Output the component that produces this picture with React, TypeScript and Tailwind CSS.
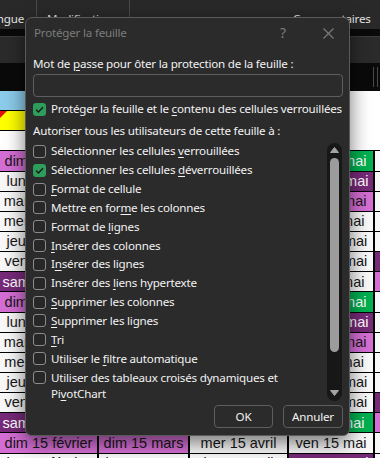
import React from 'react';

const wd = ['dim', 'lun', 'mar', 'mer', 'jeu', 'ven', 'sam'];
const months = [
  { name: 'février', start: 0 },
  { name: 'mars', start: 0 },
  { name: 'avril', start: 3 },
  { name: 'mai', start: 5 },
  { name: 'juin', start: 1 },
];
const holidays: Record<string, number[]> = { avril: [6], mai: [1, 8, 14] };

function cellClass(month: string, day: number, w: number) {
  if ((holidays[month] || []).includes(day)) return 'bg-[#00b050] text-white';
  if (w === 6) return 'bg-[#762a78] text-white';
  if (w === 0) return 'bg-[#d46ed4] text-[#161616]';
  return 'bg-[#f8f8f8] text-[#161616]';
}

const UI = { fontFamily: '"Noto Sans", "Open Sans", sans-serif' };
const CELL = { fontFamily: '"Liberation Sans", Arial, sans-serif' };

function Box({ checked }: { checked?: boolean }) {
  if (checked)
    return (
      <div className="flex h-[13px] w-[13px] shrink-0 items-center justify-center rounded-[3px] bg-[#2e9c5b]">
        <svg width="9" height="7" viewBox="0 0 9 7">
          <path d="M1 3.6 L3.4 6 L8 1.2" fill="none" stroke="#151515" strokeWidth="1.3" />
        </svg>
      </div>
    );
  return <div className="h-[13px] w-[13px] shrink-0 rounded-[3px] border border-[#8c8c8c] bg-[#272727]" />;
}

function K({ children }: { children: React.ReactNode }) {
  return <span className="underline decoration-1 underline-offset-[2px]">{children}</span>;
}

const items: { label: React.ReactNode; checked?: boolean }[] = [
  { label: <>Sélectionner les cellules <K>v</K>errouillées</> },
  { label: <>Sélectionner les cellules <K>d</K>éverrouillées</>, checked: true },
  { label: <><K>F</K>ormat de cellule</> },
  { label: <>Mettre en for<K>m</K>e les colonnes</> },
  { label: <>Format de <K>l</K>ignes</> },
  { label: <><K>I</K>nsérer des colonnes</> },
  { label: <>I<K>n</K>sérer des lignes</> },
  { label: <>Insérer des <K>l</K>iens hypertexte</> },
  { label: <><K>S</K>upprimer les colonnes</> },
  { label: <><K>S</K>upprimer les lignes</> },
  { label: <><K>T</K>ri</> },
  { label: <>Utiliser le <K>f</K>iltre automatique</> },
];

export default function App() {
  const days = Array.from({ length: 16 }, (_, i) => i + 1);
  return (
    <div className="relative h-[458px] w-[380px] overflow-hidden bg-black">
      {/* Ribbon */}
      <div className="flex h-[29px] bg-[#292929] text-[11.6px] tracking-[-0.2px] text-[#e6e6e6]" style={UI}>
        <div className="flex w-[36px] shrink-0 items-end justify-end overflow-hidden pb-[2px] pr-[12px] leading-[16px]">
          <span className="whitespace-nowrap">Langue</span>
        </div>
        <div className="w-px bg-[#4a4a4a]" />
        <div className="flex w-[92px] shrink-0 items-end pb-[2px] pl-[10px] leading-[16px]">
          <span className="whitespace-nowrap">Modifications</span>
        </div>
        <div className="w-px bg-[#4a4a4a]" />
        <div className="flex flex-1 items-end pb-[2px] pl-[163px] leading-[16px]">
          <span className="whitespace-nowrap">Commentaires</span>
        </div>
      </div>
      <div className="h-[7px] bg-[#0a0a0a]" />
      <div className="h-[27px] border-t border-[#3c3c3c] bg-[#2b2b2b]" />
      <div className="flex h-[28px] items-center justify-end gap-[3px] bg-[#0a0a0a] pr-[2px]">
        <div className="h-[20px] w-px bg-[#4a4a4a]" />
        <div className="h-[20px] w-px bg-[#4a4a4a]" />
      </div>

      {/* Sheet */}
      <div
        className="grid w-[480px] grid-cols-[97px_89px_97px_84px_96px] auto-rows-[19.15px] gap-x-[2px] gap-y-px bg-black text-[14.5px]"
        style={CELL}
      >
        <div className="bg-[#8ccbea]" />
        <div className="col-span-4 row-span-3 bg-white" />
        <div className="relative bg-[#ffff00]">
          <svg className="absolute left-0 top-0" width="7" height="7" viewBox="0 0 7 7">
            <path d="M0 0 H7 L0 7 Z" fill="#e01010" />
          </svg>
        </div>
        <div className="bg-white" />
        {days.map((d) =>
          months.map((m) => {
            const w = (m.start + d - 1) % 7;
            return (
              <div
                key={m.name + d}
                className={`flex items-center justify-center overflow-hidden whitespace-nowrap leading-none ${cellClass(m.name, d, w)}`}
              >
                {wd[w]} {String(d).padStart(2, '0')} {m.name}
              </div>
            );
          })
        )}
      </div>

      {/* Dialog */}
      <div
        className="absolute left-[25px] top-[17px] flex h-[419px] w-[325px] flex-col rounded-[7px] border border-[#5a5a5a] bg-[#2b2b2b] text-[11.6px] tracking-[-0.2px] text-[#f2f2f2] shadow-[0_6px_20px_rgba(0,0,0,0.55)]"
        style={UI}
      >
        <div className="flex h-[30px] shrink-0 items-center pl-[8px] pr-[15px] text-[#7c7c7c]">
          <span className="leading-[16px]">Protéger la feuille</span>
          <span className="ml-auto text-[14px] leading-[16px]">?</span>
          <svg className="ml-[37px]" width="11" height="11" viewBox="0 0 11 11">
            <path d="M0.5 0.5 L10.5 10.5 M10.5 0.5 L0.5 10.5" stroke="#7c7c7c" strokeWidth="1.1" />
          </svg>
        </div>
        <div className="flex flex-1 flex-col pl-[7px] pr-[6px]">
          <div className="mt-[8px] leading-[16px]">
            Mot de <K>p</K>asse pour ôter la protection de la feuille :
          </div>
          <div className="mt-[2px] h-[23px] rounded-[4px] border border-[#5e5e5e] bg-[#2b2b2b]" />
          <div className="mt-[4px] flex h-[16px] items-center gap-[5px] leading-[16px]">
            <Box checked />
            <span className="whitespace-nowrap">
              Protéger la feuille et le <K>c</K>ontenu des cellules verrouillées
            </span>
          </div>
          <div className="mt-[6px] leading-[16px]">Autoriser tous les utilisateurs de cette feuille à :</div>
          <div className="mt-[3px] flex h-[260px]">
            <div className="flex flex-1 flex-col">
              {items.map((it, i) => (
                <div key={i} className="flex h-[19px] items-center gap-[5px] leading-[16px]">
                  <Box checked={it.checked} />
                  <span className="whitespace-nowrap">{it.label}</span>
                </div>
              ))}
              <div className="flex items-start gap-[5px] pt-[2px] leading-[16px]">
                <div className="pt-[1px]">
                  <Box />
                </div>
                <span>
                  Utiliser des tableaux croisés dynamiques et
                  <br />
                  Pi<K>v</K>otChart
                </span>
              </div>
            </div>
            <div className="mr-[1px] mt-[1px] flex h-[258px] w-[15px] flex-col items-center rounded-full bg-[#171717] pb-[5px] pt-[4px]">
              <svg width="9" height="6" viewBox="0 0 9 6">
                <path d="M4.5 0.5 L8.5 5.5 H0.5 Z" fill="#a3a3a3" stroke="#a3a3a3" strokeLinejoin="round" />
              </svg>
              <div className="mt-[5px] h-[194px] w-[9px] rounded-full bg-[#9c9c9c]" />
              <div className="flex-1" />
              <svg width="9" height="6" viewBox="0 0 9 6">
                <path d="M0.5 0.5 H8.5 L4.5 5.5 Z" fill="#a3a3a3" stroke="#a3a3a3" strokeLinejoin="round" />
              </svg>
            </div>
          </div>
          <div className="mt-[3px] flex justify-end gap-[10px]">
            <div className="flex h-[23px] w-[59px] items-center justify-center rounded-[4px] border border-[#5e5e5e] bg-[#2b2b2b]">
              OK
            </div>
            <div className="flex h-[23px] w-[60px] items-center justify-center rounded-[4px] border border-[#5e5e5e] bg-[#2b2b2b]">
              Annuler
            </div>
          </div>
        </div>
      </div>
    </div>
  );
}
